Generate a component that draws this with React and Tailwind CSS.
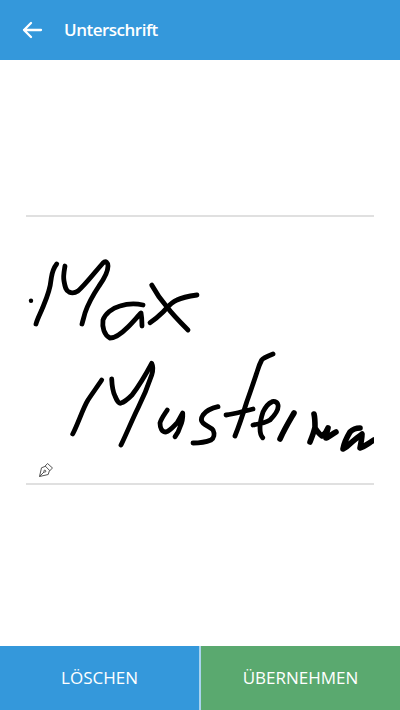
import React from "react";

const strokes = [
  "M56.7 264 C52 270 52 274 51 280 C50 292 44 304 41.7 310 C39 316 37 320 36 324",
  "M65 266 C64 272 63 276 64 281 C65 287 66 291 69 292 C72 293.500 75 293 78 291 C85 285 95 272 103 263 C106 260 108 263 108 266 C108 272 104 279 99 286 C93 295 88 304 85 313 C84 317 83 320 82 324",
  "M143 305 C136 303.500 128 303.500 120 306 C112 308 105 314 103 320 C102 327 104 335 110 338 C116 338 122 333 128 327 C133 322 138 316 141 313 C142 318 142 322 142 326",
  "M151.700 285 C156 293 161 300 167 307 C173 315 181 323 188 330",
  "M197 295 C190 296 183 297 177 300 C170 303 167 308 163 312 C159 316 154 320 150 322.700",
  "M101.700 380 C97 387 92 394 88 400 C83 408 78 424 72.700 434",
  "M111.700 379 C112 386 113 392 115 396 C117 401 119 404 121 403 C125 402 128 399 132 395 C138 387 146 374 151.700 363.300 C153 366 153 371 151.700 375 C148 386 143 398 138 408 C132 420 126 435 121 445",
  "M167.300 410 C164 415 161 419 160 423 C160 428 162 432 166 432 C170 431 173 427 177 423 C179 420 181 416 182.700 413 C183 418 182 423 180 427 C179 431 177 434 175 436.700",
  "M218 406.700 C212 408 206 411 203 415 C201 418 201 421 203 423 C206 426 211 427 213 430 C215 434 214 438 211 440 C206 442 199 443 193 443",
  "M273 354 C268 356 263 358 261.700 360 C259 365 258 369 256.700 373 C253 384 250 393 246.700 402 C243 414 239 426 235 436",
  "M226 415 C234 414 244 411 253 409",
  "M253 425 C259 424 265 423 270 420 C274 416 279 410 278 405 C277 401 273 401 271.700 402 C267 404 265 408 263 412 C261 418 260 423 260 428 C260 432 261 436 262.700 437.700",
];

const heavy = [
  "M294 413 C290 420 285 428 280 439",
  "M314 414 C315 418 315 423 315 427 C314 432 312 437 310 442 M315 428 C317 431 319 434 322 436 C325 434 327 431 328 428 C327 431 326 435 326 438 C329 437 332 434 336 432",
  "M360 428 C356 428 352 430 350 432 C347 437 344 443 343 449 C347 447 350 444 352 442 C356 439 359 436 362 434 C362 438 361 443 360 448 C364 447 369 443 374 440",
];

function Signature() {
  return (
    <svg viewBox="26 217 348 266" className="block h-full w-full">
      <circle cx="31" cy="300.700" r="2.200" fill="#000" />
      <g fill="none" stroke="#000" strokeWidth="4.800" strokeLinecap="round" strokeLinejoin="round">
        {strokes.map((d) => (
          <path key={d} d={d} />
        ))}
      </g>
      <g fill="none" stroke="#000" strokeWidth="5.600" strokeLinecap="round" strokeLinejoin="round">
        {heavy.map((d) => (
          <path key={d} d={d} />
        ))}
      </g>
    </svg>
  );
}

function PenIcon() {
  return (
    <svg viewBox="0 0 16 16" className="absolute bottom-[5px] left-[12px] h-4 w-4" fill="none" stroke="#555" strokeWidth="1" strokeLinejoin="round">
      <path d="M9.500 1.500 L14.500 6 L11.800 8.700 L7.200 4 Z" />
      <path d="M7.600 4.200 L3.500 5.800 L1.500 14.500 L10.200 12.500 L11.500 8.400" />
      <path d="M1.500 14.500 L6 10" />
      <circle cx="6.800" cy="9.200" r="1" />
    </svg>
  );
}

export default function App() {
  return (
    <div className="flex h-[710px] w-[400px] flex-col bg-white font-['Open_Sans',sans-serif]">
      <header className="flex h-[60px] items-center bg-[#3498db] text-white">
        <svg viewBox="0 0 24 24" className="ml-[20px] h-6 w-6" fill="none" stroke="#fff" strokeWidth="2.300" strokeLinecap="round" strokeLinejoin="round">
          <path d="M21 12 H4 M11 5 L4 12 L11 19" />
        </svg>
        <h1 className="ml-[20px] text-[17px] font-semibold tracking-[-0.5px]">Unterschrift</h1>
      </header>
      <main className="flex-1 px-[26px] pt-[155px]">
        <div className="relative h-[270px] border-y-2 border-[#e0e0e0]">
          <Signature />
          <PenIcon />
        </div>
      </main>
      <footer className="flex h-[64px] text-[17px] text-white">
        <button className="flex-1 bg-[#3498db]">LÖSCHEN</button>
        <div className="w-[2px] bg-[#a9d3ef]" />
        <button className="flex-1 bg-[#5aa96f]">ÜBERNEHMEN</button>
      </footer>
    </div>
  );
}
